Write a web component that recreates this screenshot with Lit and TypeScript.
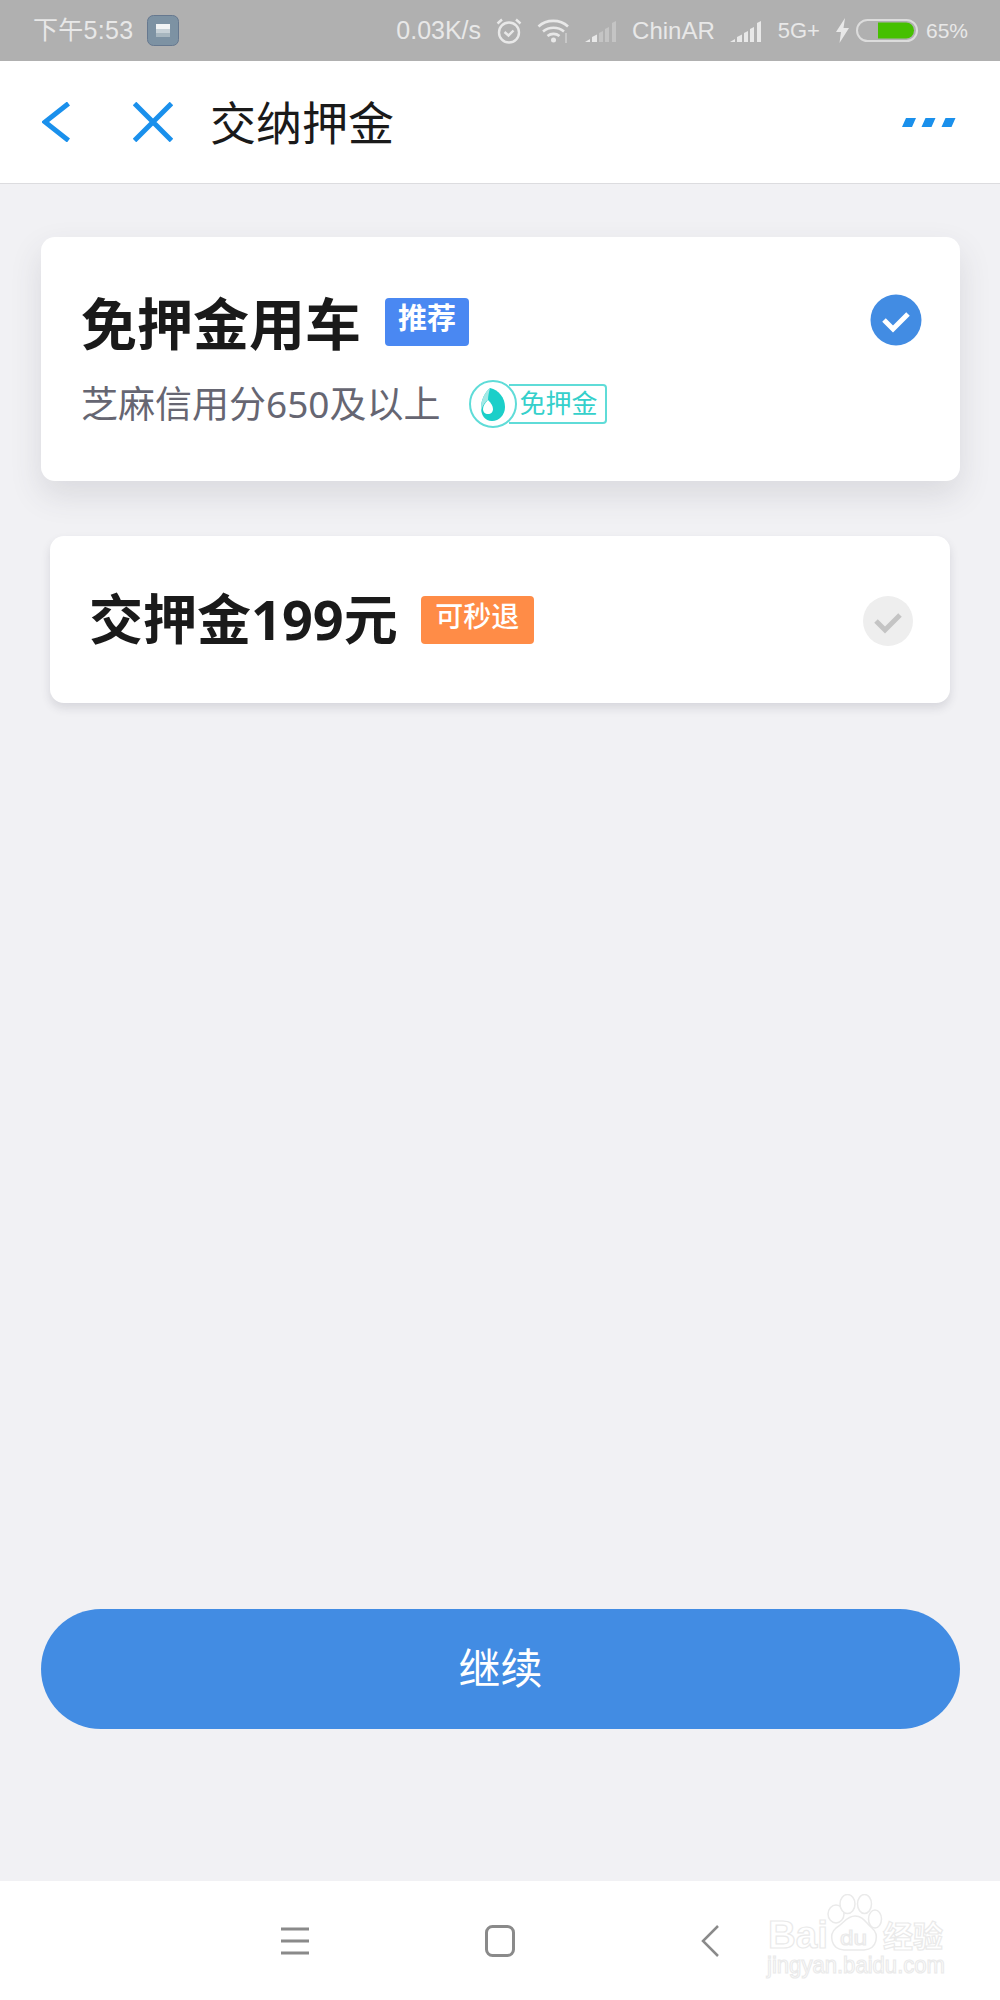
import { LitElement, html, css } from 'lit';
import { customElement } from 'lit/decorators.js';

@customElement('app-root')
export class AppRoot extends LitElement {
  static styles = css`
    :host {
      display: block;
      width: 1000px;
      height: 2000px;
      font-family: "Noto Sans", "Noto Sans CJK SC", sans-serif;
    }
    .page {
      display: flex;
      flex-direction: column;
      height: 2000px;
      background: #f1f1f4;
    }

    /* status bar */
    .status {
      display: flex;
      align-items: center;
      height: 61px;
      padding: 0 32px 0 33px;
      box-sizing: border-box;
      background: #b0b0b0;
      color: #e8e8e8;
      font-family: "Liberation Sans", "Noto Sans CJK SC", sans-serif;
      font-size: 24px;
      line-height: 61px;
      flex: none;
    }
    .status svg { display: block; flex: none; }
    .clock { font-size: 25px; width: 114px; letter-spacing: 0.3px; }
    .app-icon { margin-right: auto; }
    .speed { font-size: 25px; margin-right: 15px; }
    .alarm { margin-right: 15px; }
    .wifi { margin-right: 15px; }
    .sig1 { margin-right: 15px; }
    .carrier { margin-right: 15px; }
    .sig2 { margin-right: 16px; }
    .net { font-size: 22px; margin-right: 15px; }
    .bolt { margin-right: 6px; }
    .battery { margin-right: 8px; }
    .pct { font-size: 21px; }

    /* nav bar */
    .nav {
      display: flex;
      align-items: center;
      height: 123px;
      box-sizing: border-box;
      padding: 0 44px 0 42px;
      background: #fff;
      border-bottom: 1px solid #dcdcdf;
      flex: none;
    }
    .nav svg { display: block; flex: none; }
    .nav .back { margin-right: 63px; }
    .nav .close { margin-right: 37px; }
    .title {
      font-size: 46px;
      line-height: 60px;
      color: #1a1a1a;
      margin-right: auto;
    }

    .main {
      flex: 1;
      display: flex;
      flex-direction: column;
      padding: 53px 40px 152px 41px;
    }
    .card {
      display: flex;
      justify-content: space-between;
      background: #fff;
      box-sizing: border-box;
    }
    .card-free {
      height: 244px;
      border-radius: 14px;
      padding: 57px 38px 0 40px;
      box-shadow: 0 14px 32px rgba(60, 60, 80, 0.13);
    }
    .card-paid {
      height: 167px;
      margin: 55px 10px 0 9px;
      border-radius: 14px;
      padding: 0 37px 0 39px;
      align-items: center;
      box-shadow: 0 5px 10px rgba(60, 60, 80, 0.14);
    }
    .row {
      display: flex;
      align-items: center;
    }
    .head {
      font-size: 56px;
      line-height: 55px;
      padding-top: 2px;
      font-weight: 700;
      color: #1a1a1a;
    }
    .card-paid .head { font-size: 54px; padding-top: 0; }
    .tag {
      display: block;
      color: #fff;
      font-weight: 700;
      font-size: 29px;
      line-height: 40px;
      height: 48px;
      border-radius: 4px;
      text-align: center;
    }
    .tag-blue {
      width: 84px;
      margin: -2px 0 0 24px;
      background: #4a88f2;
    }
    .tag-orange {
      width: 113px;
      margin-left: 23px;
      background: #ff8c47;
      font-size: 28px;
      font-weight: 500;
    }
    .sub-row { margin-top: 29px; }
    .sub {
      font-size: 37px;
      line-height: 40px;
      color: #666672;
      margin-right: 28px;
    }
    .zhima {
      display: flex;
      align-items: center;
    }
    .zhima svg { display: block; margin-right: -8px; position: relative; }
    .zhima span {
      display: block;
      width: 92px;
      height: 36px;
      padding-left: 4px;
      border: 2px solid #5fdcd8;
      border-left: none;
      border-radius: 0 4px 4px 0;
      font-size: 26px;
      line-height: 35px;
      color: #35d0cb;
      text-align: center;
    }
    .check { display: block; flex: none; }
    .card-paid .check { margin-top: 3px; }

    .go {
      margin-top: auto;
      height: 120px;
      border-radius: 60px;
      background: #428ce3;
      color: #fff;
      font-size: 42px;
      line-height: 118px;
      text-align: center;
    }

    /* bottom bar */
    .sysbar {
      position: relative;
      display: flex;
      align-items: center;
      height: 119px;
      padding-left: 280px;
      background: #fff;
      flex: none;
    }
    .sysbar svg { display: block; flex: none; }
    .sysbar .menu { margin-right: 175px; }
    .sysbar .home { margin-right: 185px; }
    .mark {
      position: absolute;
      left: 760px;
      top: 13px;
    }
    .mark text {
      fill: #fff;
      stroke: #eaeaea;
      stroke-width: 1.2;
      font-family: "Liberation Sans", "Noto Sans CJK SC", sans-serif;
    }
  `;

  render() {
    return html`
      <div class="page">
        <div class="status">
          <span class="clock">下午5:53</span>
          <svg class="app-icon" width="32" height="31" viewBox="0 0 32 31">
            <rect x="0.5" y="0.5" width="31" height="30" rx="6" fill="#7d92a3" stroke="#66788f"/>
            <rect x="9" y="9" width="14" height="5" fill="#f2f4f5"/>
            <rect x="9" y="14" width="14" height="4" fill="#c6d0d6"/>
            <rect x="9" y="18" width="14" height="4" fill="#a7b6bf"/>
          </svg>
          <span class="speed">0.03K/s</span>
          <svg class="alarm" width="26" height="28" viewBox="0 0 26 28" fill="none" stroke="#e8e8e8" stroke-width="2.4">
            <circle cx="13" cy="15.5" r="10"/>
            <path d="M8.5 15l4 3.5 5-5M1.5 6.5L6 2.5M24.5 6.5L20 2.5"/>
          </svg>
          <svg class="wifi" width="33" height="26" viewBox="0 0 33 26" fill="none" stroke="#e8e8e8" stroke-width="2.6">
            <path d="M1.5 8.5C9.5 1 23 1 31 8.5M6 13.5c6-5 15-5 21 0M10.500 18c3.500-2.800 8.500-2.800 12 0"/>
            <circle cx="16.500" cy="22" r="2.500" fill="#e8e8e8" stroke="none"/>
            <path d="M29 15v10" stroke="#c8c8c8" stroke-width="2"/>
          </svg>
          <svg class="sig1" width="32" height="22" viewBox="0 0 32 22">
            <path d="M0 22l5-3v3zM7 22v-5l5-2.500V22z" fill="#e8e8e8"/>
            <path d="M14 22V13l4-2v11zM20 22V9l4-2v15zM27 22V3l4-2v21z" fill="#c4c4c4"/>
          </svg>
          <span class="carrier">ChinAR</span>
          <svg class="sig2" width="32" height="22" viewBox="0 0 32 22" fill="#e8e8e8">
            <path d="M0 22l5-3v3zM7 22v-5l5-2.500V22zM14 22V13l4-2v11zM20 22V9l4-2v15zM27 22V3l4-2v21z"/>
          </svg>
          <span class="net">5G+</span>
          <svg class="bolt" width="15" height="25" viewBox="0 0 15 25" fill="#e8e8e8">
            <path d="M10 0L1 14h5L4.500 25 14 10H8.500z"/>
          </svg>
          <svg class="battery" width="62" height="23" viewBox="0 0 62 23">
            <rect x="1" y="1" width="60" height="21" rx="10.500" fill="none" stroke="#dcdcdc" stroke-width="2"/>
            <path d="M22 3.500h28a8 8 0 0 1 0 16H22z" fill="#46c000"/>
          </svg>
          <span class="pct">65%</span>
        </div>

        <div class="nav">
          <svg class="back" width="28" height="40" viewBox="0 0 28 40" fill="none" stroke="#1a90ec" stroke-width="5">
            <path d="M26.500 1.500L3 20l23.500 18.500" stroke-linejoin="miter"/>
          </svg>
          <svg class="close" width="40" height="40" viewBox="0 0 40 40" fill="none" stroke="#1a90ec" stroke-width="5">
            <path d="M1.500 1.500l37 37M38.500 1.500l-37 37"/>
          </svg>
          <span class="title">交纳押金</span>
          <svg width="54" height="9" viewBox="0 0 54 9" fill="#1a90ec">
            <path d="M4 0h10l-4 9H0zM23.500 0h10l-4 9h-10zM43.500 0h10l-4 9h-10z"/>
          </svg>
        </div>

        <div class="main">
          <div class="card card-free">
            <div>
              <div class="row">
                <span class="head">免押金用车</span>
                <span class="tag tag-blue">推荐</span>
              </div>
              <div class="row sub-row">
                <span class="sub">芝麻信用分650及以上</span>
                <span class="zhima">
                  <svg width="48" height="48" viewBox="0 0 48 48">
                    <circle cx="24" cy="24" r="23" fill="#fff" stroke="#5fdcd8" stroke-width="2"/>
                    <path d="M21 8C30 10 36 18 36 27 36 35 30 41 23 41 16 41 12 35 12 28 12 20 16 12 21 8z" fill="#1bcfc9"/>
                    <path d="M21 8C16 12 12 20 12 28c0 1 0 2 .3 3C13 26 16 22 19 20c0-4 1-8 2-12z" fill="#a4e9e6"/>
                    <path d="M19 20c3 3 5 6 5 9 0 3-2 5-5 5s-5-2-5-5c0-3 2-6 5-9z" fill="#fff"/>
                  </svg>
                  <span>免押金</span>
                </span>
              </div>
            </div>
            <svg class="check" width="52" height="52" viewBox="0 0 52 52">
              <circle cx="26" cy="26" r="25.500" fill="#428ce3"/>
              <path d="M14 26l9 9 15-15" fill="none" stroke="#fff" stroke-width="5"/>
            </svg>
          </div>

          <div class="card card-paid">
            <div class="row">
              <span class="head">交押金199元</span>
              <span class="tag tag-orange">可秒退</span>
            </div>
            <svg class="check" width="50" height="50" viewBox="0 0 50 50">
              <circle cx="25" cy="25" r="25" fill="#eeeeee"/>
              <path d="M13 25l9 9 15-15" fill="none" stroke="#c4c4c4" stroke-width="5"/>
            </svg>
          </div>

          <div class="go">继续</div>
        </div>

        <div class="sysbar">
          <svg class="menu" width="30" height="28" viewBox="0 0 30 28" fill="none" stroke="#8a8a8a" stroke-width="3">
            <path d="M1 2h28M1 14h28M1 26h28"/>
          </svg>
          <svg class="home" width="30" height="32" viewBox="0 0 30 32" fill="none" stroke="#8a8a8a" stroke-width="3">
            <rect x="1.500" y="1.500" width="27" height="29" rx="6"/>
          </svg>
          <svg width="20" height="32" viewBox="0 0 20 32" fill="none" stroke="#8a8a8a" stroke-width="2.500">
            <path d="M18 1L3 16l15 15"/>
          </svg>
          <svg class="mark" width="200" height="92" viewBox="0 0 200 92">
            <g fill="#fff" stroke="#eaeaea" stroke-width="1.500">
              <ellipse cx="76" cy="20" rx="8" ry="9"/>
              <ellipse cx="87.500" cy="10" rx="7.500" ry="9.500"/>
              <ellipse cx="104.500" cy="10" rx="7" ry="9.500"/>
              <ellipse cx="115" cy="25" rx="6.500" ry="9"/>
              <path d="M95 22c8 0 11 7 17 12 7 6 6 21-8 22H84c-14-1-15-16-8-22 8-5 11-12 19-12z"/>
            </g>
            <text x="8" y="54" font-size="39" font-weight="700" textLength="60" lengthAdjust="spacingAndGlyphs">Bai</text>
            <text x="80" y="51" font-size="21" textLength="27" lengthAdjust="spacingAndGlyphs">du</text>
            <text x="123" y="53" font-size="30" font-weight="700" textLength="60">经验</text>
            <text x="7" y="79" font-size="24" textLength="178" lengthAdjust="spacingAndGlyphs">jingyan.baidu.com</text>
          </svg>
        </div>
      </div>
    `;
  }
}

declare global {
  interface HTMLElementTagNameMap {
    'app-root': AppRoot;
  }
}
